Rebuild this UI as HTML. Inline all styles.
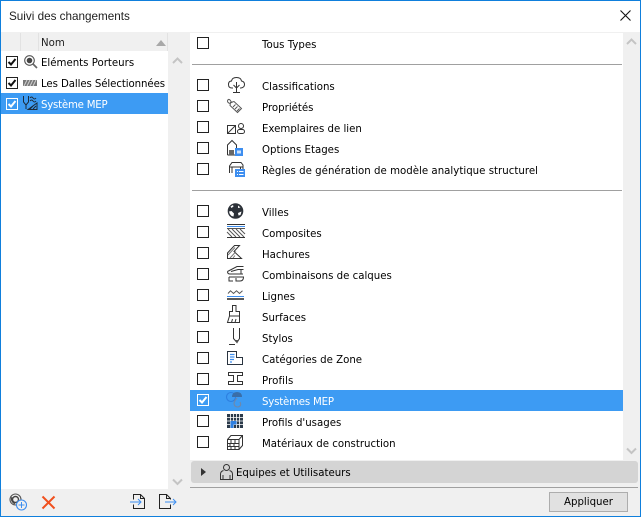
<!DOCTYPE html>
<html><head><meta charset="utf-8"><style>
html,body{margin:0;padding:0}
body{width:641px;height:517px;overflow:hidden;position:relative;background:#f0f0f0;font-family:"DejaVu Sans","Liberation Sans",sans-serif;font-size:10.2px;color:#000}
.a{position:absolute}
.t{position:absolute;white-space:nowrap;line-height:14px;height:14px}
.r{left:262px}
.c{position:absolute;box-sizing:border-box;width:12px;height:12px;border:1px solid #222;background:#fff}
.sep{position:absolute;left:192px;width:430px;height:1px;background:#a0a0a0}
svg{position:absolute;overflow:visible}
</style></head><body>
<div class="a" style="left:0;top:0;width:641px;height:32px;background:#fff"></div>
<div class="t" style="left:9px;top:10px;font-family:'Liberation Sans',sans-serif;font-size:11.7px;color:#222">Suivi des changements</div>
<svg style="left:619px;top:9px" width="13" height="13"><path d="M1.5 1.5L11.5 11.5M11.5 1.5L1.5 11.5" stroke="#111" stroke-width="1.1" fill="none"/></svg>

<!-- left list -->
<div class="a" style="left:1px;top:51px;width:167px;height:438px;background:#fff"></div>
<div class="a" style="left:20px;top:33px;width:1px;height:18px;background:#e2e2e2"></div>
<div class="a" style="left:38px;top:33px;width:1px;height:18px;background:#e2e2e2"></div>
<div class="a" style="left:167px;top:33px;width:1px;height:18px;background:#e2e2e2"></div>
<div class="t" style="left:41px;top:37px;color:#222">Nom</div>
<div class="a" style="left:156px;top:40px;width:0;height:0;border-left:5px solid transparent;border-right:5px solid transparent;border-bottom:6px solid #a8a8a8"></div>
<svg style="left:172px;top:57px" width="11" height="8"><path d="M1 6L5.500 1.500L10 6" stroke="#c4c4c4" stroke-width="2" fill="none"/></svg>
<svg style="left:172px;top:478px" width="11" height="8"><path d="M1 1.500L5.500 6L10 1.500" stroke="#c4c4c4" stroke-width="2" fill="none"/></svg>

<div class="a" style="left:1px;top:93px;width:167px;height:21px;background:#3d9bf3"></div>
<div class="c" style="left:6px;top:56px"></div>
<svg style="left:6px;top:56px" width="12" height="12"><path d="M2.500 6L5 8.500L9.500 3" stroke="#111" stroke-width="2" fill="none"/></svg>
<div class="c" style="left:6px;top:77px"></div>
<svg style="left:6px;top:77px" width="12" height="12"><path d="M2.500 6L5 8.500L9.500 3" stroke="#111" stroke-width="2" fill="none"/></svg>
<div class="c" style="left:6px;top:98px;background:#3d9bf3;border-color:#fff"></div>
<svg style="left:6px;top:98px" width="12" height="12"><path d="M2.500 6L5 8.500L9.500 3" stroke="#fff" stroke-width="2" fill="none"/></svg>

<svg style="left:24px;top:55px" width="13" height="13" fill="none"><circle cx="5.500" cy="5.500" r="4.800" stroke="#555" stroke-width="1.100"/><circle cx="5.500" cy="5.500" r="2.800" fill="#444"/><path d="M9 9L13 13" stroke="#666" stroke-width="1.700"/></svg>
<svg style="left:23px;top:80px" width="14" height="6"><rect width="14" height="6" fill="#777"/><path d="M1 6L4 0M4 6L7 0M7 6L10 0M10 6L13 0" stroke="#cfcfcf" stroke-width="1"/></svg>
<svg style="left:23px;top:96px" width="15" height="14" fill="none" stroke="#1c2b3a"><path d="M.5 0V6L3 9V13M5.500 0V6L3 9" stroke-width="1"/><path d="M7 2q1.500 -2 3 0t3 0M7 5q1.500 -2 3 0t3 0" stroke-width="1"/><path d="M5 13.500L14 7V13.500Z" stroke-width="1"/><path d="M7 13L10 10M10 13L13 10" stroke-width="1"/></svg>

<div class="t" style="left:41px;top:57px">Eléments Porteurs</div>
<div class="t" style="left:41px;top:78px;letter-spacing:-.09px">Les Dalles Sélectionnées</div>
<div class="t" style="left:41px;top:99px;color:#fff;letter-spacing:-.22px">Système MEP</div>

<!-- bottom left icons -->
<svg style="left:9px;top:493px" width="19" height="18" fill="none"><circle cx="6.500" cy="6.500" r="5.500" stroke="#555" stroke-width="1.100"/><circle cx="6.500" cy="6.500" r="3" stroke="#444" stroke-width="1.400"/><path d="M3 4Q1 8 6 11" stroke="#444"/><circle cx="12.500" cy="12" r="5" fill="#f0f0f0" stroke="#3d8ef0" stroke-width="1.100"/><path d="M12.500 9V15M9.500 12H15.500" stroke="#3d8ef0"/></svg>
<svg style="left:41px;top:495px" width="15" height="15"><path d="M1.500 1.500L13.500 13.500M13.500 1.500L1.500 13.500" stroke="#f0501e" stroke-width="2" fill="none"/></svg>
<svg style="left:130px;top:494px" width="16" height="16" fill="none"><path d="M3.500 5.500V.5H10.500L14.500 4.500V14.500H3.500V10.500" stroke="#222"/><path d="M10.500 .5V4.500H14.500" stroke="#222"/><path d="M0 8H11M8 5L11 8L8 11" stroke="#3d8ef0"/></svg>
<svg style="left:159px;top:494px" width="18" height="16" fill="none"><path d="M11.500 5.500V4.500L7.500 .5H.5V14.500H11.500V10.500" stroke="#222"/><path d="M7.500 .5V4.500H11.500" stroke="#222"/><path d="M6 8H17M14 5L17 8L14 11" stroke="#3d8ef0"/></svg>

<!-- right panel -->
<div class="a" style="left:190px;top:33px;width:433px;height:427px;background:#fff"></div>
<svg style="left:626px;top:38px" width="11" height="8"><path d="M1 6L5.500 1.500L10 6" stroke="#c4c4c4" stroke-width="2" fill="none"/></svg>
<svg style="left:626px;top:447px" width="11" height="8"><path d="M1 1.500L5.500 6L10 1.500" stroke="#c4c4c4" stroke-width="2" fill="none"/></svg>
<div class="sep" style="top:64px"></div>
<div class="sep" style="top:190px"></div>
<div class="a" style="left:190px;top:390px;width:433px;height:21px;background:#3d9bf3"></div>

<div class="c" style="left:197px;top:37px"></div>
<div class="c" style="left:197px;top:79px"></div>
<div class="c" style="left:197px;top:100px"></div>
<div class="c" style="left:197px;top:121px"></div>
<div class="c" style="left:197px;top:142px"></div>
<div class="c" style="left:197px;top:163px"></div>
<div class="c" style="left:197px;top:205px"></div>
<div class="c" style="left:197px;top:226px"></div>
<div class="c" style="left:197px;top:247px"></div>
<div class="c" style="left:197px;top:268px"></div>
<div class="c" style="left:197px;top:289px"></div>
<div class="c" style="left:197px;top:310px"></div>
<div class="c" style="left:197px;top:331px"></div>
<div class="c" style="left:197px;top:352px"></div>
<div class="c" style="left:197px;top:373px"></div>
<div class="c" style="left:197px;top:394px;background:#3d9bf3;border-color:#fff"></div>
<svg style="left:197px;top:394px" width="12" height="12"><path d="M2.500 6L5 8.500L9.500 3" stroke="#fff" stroke-width="2" fill="none"/></svg>
<div class="c" style="left:197px;top:415px"></div>
<div class="c" style="left:197px;top:436px"></div>

<div class="t r" style="top:39px">Tous Types</div>
<div class="t r" style="top:81px">Classifications</div>
<div class="t r" style="top:102px">Propriétés</div>
<div class="t r" style="top:123px">Exemplaires de lien</div>
<div class="t r" style="top:144px">Options Etages</div>
<div class="t r" style="top:165px;letter-spacing:.02px">Règles de génération de modèle analytique structurel</div>
<div class="t r" style="top:207px">Villes</div>
<div class="t r" style="top:228px">Composites</div>
<div class="t r" style="top:249px">Hachures</div>
<div class="t r" style="top:270px">Combinaisons de calques</div>
<div class="t r" style="top:291px">Lignes</div>
<div class="t r" style="top:312px">Surfaces</div>
<div class="t r" style="top:333px">Stylos</div>
<div class="t r" style="top:354px">Catégories de Zone</div>
<div class="t r" style="top:375px;letter-spacing:.1px">Profils</div>
<div class="t r" style="top:396px;color:#fff;letter-spacing:-.2px">Systèmes MEP</div>
<div class="t r" style="top:417px">Profils d'usages</div>
<div class="t r" style="top:438px">Matériaux de construction</div>

<!-- icons -->
<svg style="left:228px;top:77px" width="17" height="16" fill="none" stroke="#333"><path d="M5 11H4Q.5 11 .5 7.500T3.500 4Q4 .5 8.500 .5Q13 .5 13.500 4Q16.500 4.500 16.500 7.500T13 11H12"/><path d="M8.500 5V15.500M5 15.500H12M5.500 8L8.500 11L11.500 8"/></svg>
<svg style="left:227px;top:99px" width="15" height="14" fill="none" stroke="#555"><path d="M3.500 3.500L7 2.500L14.500 9.500L10.500 13.500L3 6.500Z"/><path d="M5 4L3 1Q1 -.5 .5 2Q.5 4 3.500 4.500M6 8L8.500 5.500M8 10L10.500 7.500M10 12L12.500 9.500"/></svg>
<svg style="left:227px;top:123px" width="18" height="11" fill="none" stroke="#333"><rect x=".5" y="2.500" width="8" height="8"/><path d="M.5 10.500L8.500 2.500"/><circle cx="14" cy="3" r="2.500"/><rect x="10.500" y="6.500" width="7" height="4" rx="2"/></svg>
<svg style="left:227px;top:140px" width="16" height="16"><path d="M.5 15V5L5 .5L9.500 5V8" fill="none" stroke="#333"/><path d="M.5 15H8" stroke="#333"/><rect x="2" y="10" width="5" height="5" fill="#666"/><rect x="8" y="8" width="8" height="8" fill="#3d8ef0"/><path d="M10 12H14" stroke="#cfe3fb" stroke-width="3"/></svg>
<svg style="left:229px;top:162px" width="16" height="15"><path d="M.5 11V4L3 .5H12L14 3V7M.5 5H14M3 5V11M11.500 5V7" fill="none" stroke="#333"/><rect x="6" y="7" width="10" height="8" fill="#3d8ef0"/><path d="M8 9.500H9M10 9.500H14.500M8 12.500H9M10 12.500H14.500" stroke="#fff"/></svg>

<svg style="left:227px;top:203px" width="17" height="16"><circle cx="8.500" cy="8" r="7.800" fill="#2c3138"/><path d="M2 8.500L4.500 8L7 10.500L6.500 13.500L4.500 13L2.800 11Z M11 10L14.500 8.500L13.500 12L11.500 12.500Z M3.500 3.500L6 2L6.500 3.500L4.500 5Z M11 2.500L13.500 4.500L11 5Z" fill="#fff"/></svg>
<svg style="left:227px;top:224px" width="18" height="14" fill="none"><path d="M0 .5H18" stroke="#333"/><path d="M0 2.500H18" stroke="#3d8ef0"/><path d="M0 4.500H18" stroke="#555"/><path d="M1 5L9 13M5 5L13 13M9 5L17 13M13 5L18 10M0 8L5 13" stroke="#555"/><path d="M0 13.500H18" stroke="#333"/></svg>
<svg style="left:227px;top:245px" width="18" height="14" fill="none" stroke="#333"><path d="M.5 13.500V8L7.500 .5H12.500L7 6.500L14.500 13.500Z"/><path d="M1 10L8 2.500M3 13L9 6.500M6 13L8 10.500" stroke="#777"/></svg>
<svg style="left:227px;top:266px" width="17" height="16" fill="none" stroke="#333"><path d="M.5 5.500L10 .5H16.500M.5 5.500Q.5 8 3 8H16M4 5.500L11 3.500H16.500M14 3.500V8M2 11H16.500Q16.500 15 13 15H9V12M2 11V15H6"/></svg>
<svg style="left:227px;top:290px" width="17" height="10" fill="none"><path d="M1 3.500L3.500 .8L6.500 3.500L9.500 .8L12.500 3.500L15.500 .8" stroke="#555"/><path d="M0 6.500H17" stroke="#3d8ef0"/><path d="M0 9H17" stroke="#222" stroke-width="1.500"/></svg>
<svg style="left:227px;top:305px" width="15" height="18" fill="none" stroke="#333"><path d="M5.500 .5H9V6.500H12.500V11H2.500V6.500H5.500Z"/><path d="M2.500 11L.5 17.500H12.500V11M5.500 14L4.500 17.500M9 14L8 17.500"/></svg>
<svg style="left:229px;top:328px" width="12" height="17" fill="none" stroke="#333"><path d="M4.500 0V10.500L8 14.500L10.500 10.500V0"/><path d="M0 16.500H6"/><path d="M6.500 12H9.500L8 15.500Z" fill="#555" stroke="none"/></svg>
<svg style="left:227px;top:351px" width="16" height="14"><path d="M.5 .5H9.500V6.500H15.500V13.500H.5Z" fill="none" stroke="#2a3440"/><path d="M3 3.500H7.500M3 6H7.500M3 8.500H7M3 11H5" stroke="#3d8ef0" stroke-width="1.200"/></svg>
<svg style="left:228px;top:372px" width="15" height="13" fill="none" stroke="#333"><path d="M.5 .5H14.500V3.500H9.500V9.500H14.500V12.500H.5V9.500H5.500V3.500H.5Z"/></svg>
<svg style="left:226px;top:391px" width="18" height="17" fill="none"><circle cx="5" cy="6" r="4.500" stroke="#2e7fe0" stroke-width="1.100"/><path d="M6 6Q6 1 11 1T16 6H6Z" fill="#3a6ea8"/><path d="M11 7Q9 9 8 12Q8 16 12 16Q16 15 14 11" stroke="#6f88aa" stroke-width="1.100"/></svg>
<svg style="left:227px;top:414px" width="16" height="14"><rect width="16" height="14" fill="#2b3a4a"/><path d="M0 3.500H16M0 7H16M0 10.500H16M3.500 0V14M6.500 0V14M9.500 0V14M12.500 0V14" stroke="#fff" stroke-width=".8"/><rect x="3.500" y="7" width="6" height="3.500" fill="#2e7fe0"/><rect x="3.500" y="10.500" width="3" height="3.500" fill="#2e7fe0"/></svg>
<svg style="left:227px;top:435px" width="16" height="15" fill="none" stroke="#333"><path d="M.5 4.500L4 .5H15.500V10.500L12 14.500H.5ZM.5 4.500H12L15.500 .5M12 4.500V14.500M.5 8.500H12M.5 11.500H12M4 4.500V8.500M8 4.500V8.500M3 8.500V11.500M7 8.500V11.500M4 11.500V14.500M8 11.500V14.500"/></svg>

<!-- disclosure -->
<div class="a" style="left:191px;top:461px;width:447px;height:22px;background:#d4d4d4;border-radius:3px"></div>
<div class="a" style="left:201px;top:468px;width:0;height:0;border-top:4px solid transparent;border-bottom:4px solid transparent;border-left:5px solid #333"></div>
<svg style="left:220px;top:464px" width="13" height="16" fill="none" stroke="#333"><circle cx="6.500" cy="3.500" r="3"/><path d="M3.500 6.500Q.5 7.500 .5 10V15.500H12.500V10Q12.500 7.500 9.500 6.500M3 11V15.500M10 11V15.500"/></svg>
<div class="t" style="left:236px;top:467px">Equipes et Utilisateurs</div>
<div class="a" style="left:190px;top:487px;width:448px;height:1px;background:#a0a0a0"></div>

<div class="a" style="left:549px;top:492px;width:79px;height:20px;box-sizing:border-box;border:1px solid #adadad;background:#e1e1e1;text-align:center;line-height:20px;color:#000">Appliquer</div>

<!-- window border -->
<div class="a" style="left:0;top:0;width:641px;height:517px;box-sizing:border-box;border:1px solid #0f7fdc;pointer-events:none"></div>
</body></html>
